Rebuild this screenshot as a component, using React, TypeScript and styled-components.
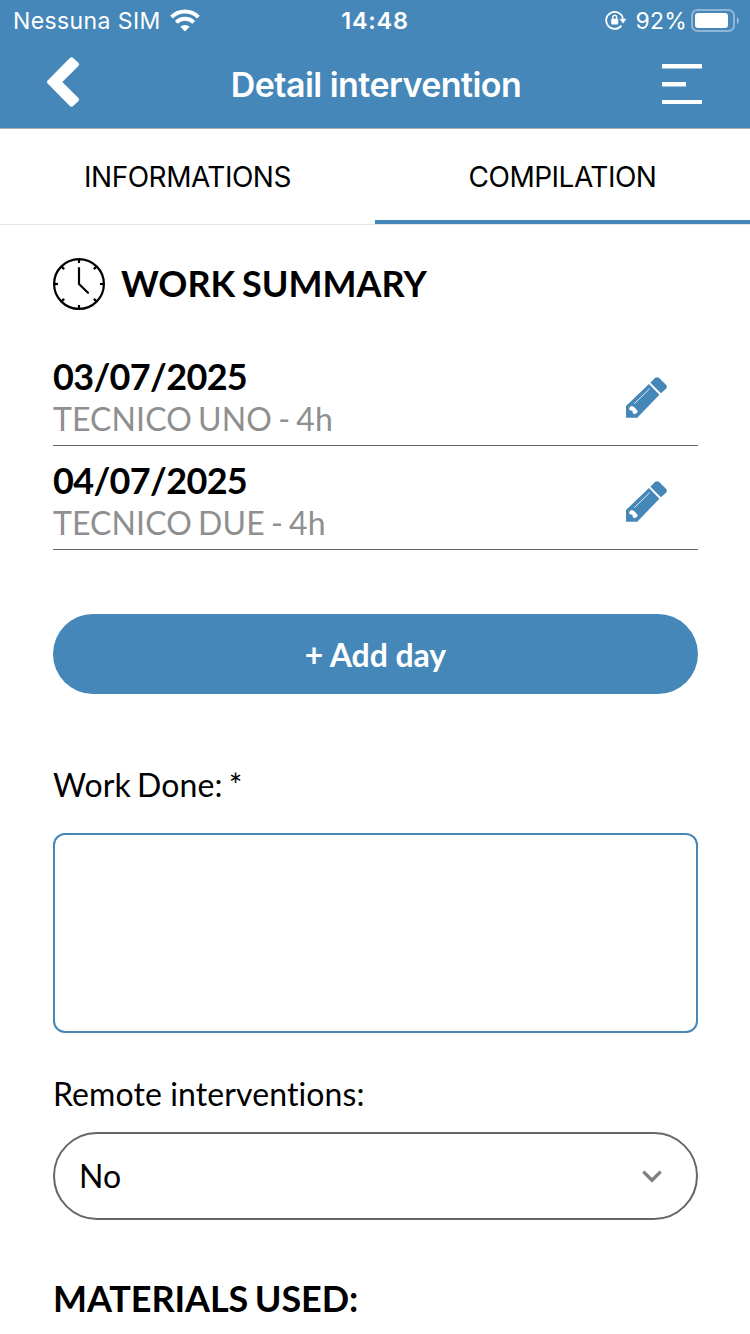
import React from "react";
import styled, { createGlobalStyle } from "styled-components";

const blue = "#4587b9";
const sans = `Inter, "Liberation Sans", sans-serif`;
const lato = `Lato, "Open Sans", sans-serif`;

const GlobalStyle = createGlobalStyle`
  *, *::before, *::after { box-sizing: border-box; }
  html, body { margin: 0; background: #fff; }
  body { font-family: ${lato}; color: #000; overflow: hidden; }
  svg { display: block; flex: none; }
`;

const Screen = styled.div`
  width: 750px;
  height: 1334px;
  overflow: hidden;
  display: flex;
  flex-direction: column;
`;

const Header = styled.header`
  height: 129px;
  flex: none;
  background: ${blue};
  border-bottom: 1px solid #a9adb0;
  color: #fff;
`;

const StatusBar = styled.div`
  height: 40px;
  display: grid;
  grid-template-columns: 1fr auto 1fr;
  align-items: center;
  padding: 0 11px 0 13px;
  font: 400 23px/38px ${sans};
`;

const StatusGroup = styled.div<{ $end?: boolean }>`
  display: flex;
  align-items: center;
  justify-content: ${(p) => (p.$end ? "flex-end" : "flex-start")};
`;

const Carrier = styled.span`
  padding-top: 2px;
  letter-spacing: 0.4px;
  margin-right: 9px;
`;

const Time = styled.span`
  padding-top: 2px;
  margin-right: 2px;
  font-weight: 600;
  font-size: 23.5px;
  letter-spacing: 0.7px;
`;

const Percent = styled.span`
  padding-top: 2px;
  margin: 0 4px 0 9px;
  letter-spacing: 0.2px;
`;

const NavBar = styled.div`
  height: 88px;
  display: grid;
  grid-template-columns: 120px 1fr 120px;
  grid-template-rows: 88px;
  align-items: center;
`;

const NavButton = styled.button<{ $end?: boolean }>`
  height: 88px;
  border: 0;
  background: none;
  color: inherit;
  display: flex;
  align-items: center;
  justify-content: ${(p) => (p.$end ? "flex-end" : "flex-start")};
  padding: ${(p) => (p.$end ? "0 48px 0 0" : "0 0 4px 46px")};
`;

const Title = styled.h1`
  margin: 0;
  padding-left: 2px;
  text-align: center;
  height: 88px;
  font: 600 34px/90px ${sans};
  letter-spacing: -0.55px;
  white-space: nowrap;
`;

const Tabs = styled.nav`
  height: 96px;
  flex: none;
  display: grid;
  grid-template-columns: 1fr 1fr;
  border-bottom: 1px solid #e6e6e6;
`;

const Tab = styled.button<{ $active?: boolean }>`
  border: 0;
  border-bottom: 4px solid ${(p) => (p.$active ? blue : "transparent")};
  background: none;
  color: #000;
  padding: 5px 0 0;
  font: 400 28px/34px ${sans};
  letter-spacing: -0.5px;
`;

const Content = styled.main`
  padding: 33px 52px 0 53px;
  display: flex;
  flex-direction: column;
`;

const Heading = styled.h2`
  margin: 0;
  height: 52px;
  display: flex;
  align-items: center;
  gap: 16px;
  font: 700 36px/50px ${lato};
  word-spacing: -2px;
  white-space: nowrap;
`;

const HeadingText = styled.span<{ $tight?: boolean }>`
  padding-bottom: 2px;
  letter-spacing: ${(p) => (p.$tight ? "-0.1px" : "0")};
`;

const DayList = styled.ul`
  list-style: none;
  margin: 32px 0 64px;
  padding: 0;
`;

const DayRow = styled.li`
  height: 104px;
  display: flex;
  justify-content: space-between;
  align-items: flex-start;
  padding: 13px 31px 0 0;
  border-bottom: 1px solid #666;
`;

const DayDate = styled.div`
  font: 700 36px/42px ${lato};
  letter-spacing: -0.65px;
`;

const DayWorker = styled.div`
  color: #8f8f8f;
  font: 400 32px/43px ${lato};
  letter-spacing: 0.1px;
  word-spacing: -2.1px;
`;

const EditButton = styled.button`
  border: 0;
  padding: 21px 0 0;
  background: none;
  color: ${blue};
`;

const AddButton = styled.button`
  height: 80px;
  border: 0;
  border-radius: 40px;
  background: ${blue};
  color: #fff;
  padding: 1px 0 0;
  font: 700 32px/79px ${lato};
  word-spacing: -0.3px;
`;

const Label = styled.label<{ $top: number; $bottom: number; $wordGap?: number }>`
  margin: ${(p) => p.$top}px 0 ${(p) => p.$bottom}px;
  font: 400 32px/39px ${lato};
  font-variant-ligatures: no-common-ligatures;
  font-feature-settings: "liga" 0, "dlig" 0;
  letter-spacing: 0.1px;
  word-spacing: ${(p) => p.$wordGap ?? 0}px;
`;

const TextArea = styled.textarea`
  display: block;
  width: 100%;
  height: 200px;
  border: 2px solid ${blue};
  border-radius: 12px;
  background: #fff;
  resize: none;
  outline: none;
`;

const Select = styled.div`
  height: 88px;
  margin-bottom: 53px;
  border: 2px solid #666;
  border-radius: 44px;
  display: flex;
  align-items: center;
  justify-content: space-between;
  padding: 0 34px 0 24px;
  font: 400 32px/39px ${lato};
`;

const SelectValue = styled.span`
  padding-bottom: 1px;
`;

const WifiIcon = () => (
  <svg width="30" height="23" viewBox="0 0 30 23" fill="none" stroke="currentColor">
    <path d="M1.6 8.1a19 19 0 0 1 26.8 0" strokeWidth="4" />
    <path d="M6.3 13.4a12.2 12.2 0 0 1 17.4 0" strokeWidth="3.8" />
    <path d="M10.4 17.8a6.6 6.6 0 0 1 9.2 0L15 22.4z" fill="currentColor" stroke="none" />
  </svg>
);

const RotationLockIcon = () => (
  <svg width="22" height="20" viewBox="0 0 22 20" fill="none" stroke="currentColor">
    <path d="M16.4 15.6A8.5 8.5 0 1 1 18 8.6" strokeWidth="1.8" />
    <path d="M14.6 8.8h6.8L18 13.4z" fill="currentColor" stroke="none" />
    <rect x="6.2" y="8.7" width="7" height="5.8" rx="0.8" fill="currentColor" stroke="none" />
    <path d="M7.8 9V7.2a1.9 1.9 0 0 1 3.8 0V9" strokeWidth="1.4" />
  </svg>
);

const BatteryIcon = () => (
  <svg width="48" height="23" viewBox="0 0 48 23" fill="none">
    <rect x="1" y="1" width="42" height="21" rx="5.5" stroke="#fff" strokeOpacity="0.4" strokeWidth="2" />
    <rect x="4" y="4" width="33" height="15" rx="3" fill="#fff" />
    <path d="M46 8c2.4 1.2 2.4 5.8 0 7z" fill="#fff" fillOpacity="0.5" />
  </svg>
);

const BackIcon = () => (
  <svg width="34" height="52" viewBox="0 0 34 52" fill="currentColor">
    <path d="M1.4 24.8 23.6 2.2q1.9-1.9 3.8 0l5 4.6q1.6 1.6 0 3.2L16.3 26l16.1 16q1.6 1.6 0 3.2l-5 4.6q-1.9 1.9-3.8 0L1.4 27.2q-1-1.2 0-2.4z" />
  </svg>
);

const MenuIcon = () => (
  <svg width="40" height="40" viewBox="0 0 40 40" fill="currentColor">
    <path d="M0 0h40v4.4H0zM0 18h24v4.4H0zM0 36h40v4H0z" />
  </svg>
);

const tickAngles = [0, 45, 90, 135, 180, 225, 270, 315];

const ClockIcon = () => (
  <svg width="52" height="52" viewBox="0 0 52 52" fill="none" stroke="#000" strokeWidth="2.2">
    <circle cx="26" cy="26" r="24.9" />
    {tickAngles.map((a) => (
      <path key={a} d="M26 1.5V5" transform={`rotate(${a} 26 26)`} />
    ))}
    <path d="M26 10v16l9 8.8" strokeLinecap="round" strokeLinejoin="round" />
  </svg>
);

const PencilIcon = () => (
  <svg width="42" height="42" viewBox="75 48 126 126">
    <path
      fill="currentColor"
      fillRule="evenodd"
      d="M147 72l31 32-66 69H78v-35zM95 137l-7 6v7l10 3v7l7 3 9-8-9-12z"
    />
    <path fill="currentColor" d="M151 68l13-13q7-6 14 0l20 19q5 6 0 12l-15 14z" />
    <path d="M103 131l46-45" stroke="#fff" strokeWidth="2.6" fill="none" />
  </svg>
);

const ChevronIcon = () => (
  <svg width="20" height="13" viewBox="0 0 20 13" fill="none" stroke="#808080" strokeWidth="3.4">
    <path d="M1.3 1.6 10 10.3l8.7-8.7" />
  </svg>
);

const days = [
  { date: "03/07/2025", worker: "TECNICO UNO - 4h" },
  { date: "04/07/2025", worker: "TECNICO DUE - 4h" },
];

export default function App() {
  return (
    <Screen>
      <GlobalStyle />
      <Header>
        <StatusBar>
          <StatusGroup>
            <Carrier>Nessuna SIM</Carrier>
            <WifiIcon />
          </StatusGroup>
          <Time>14:48</Time>
          <StatusGroup $end>
            <RotationLockIcon />
            <Percent>92%</Percent>
            <BatteryIcon />
          </StatusGroup>
        </StatusBar>
        <NavBar>
          <NavButton aria-label="Back">
            <BackIcon />
          </NavButton>
          <Title>Detail intervention</Title>
          <NavButton $end aria-label="Menu">
            <MenuIcon />
          </NavButton>
        </NavBar>
      </Header>
      <Tabs>
        <Tab>INFORMATIONS</Tab>
        <Tab $active>COMPILATION</Tab>
      </Tabs>
      <Content>
        <Heading>
          <ClockIcon />
          <HeadingText>WORK SUMMARY</HeadingText>
        </Heading>
        <DayList>
          {days.map((day) => (
            <DayRow key={day.date}>
              <div>
                <DayDate>{day.date}</DayDate>
                <DayWorker>{day.worker}</DayWorker>
              </div>
              <EditButton aria-label="Edit">
                <PencilIcon />
              </EditButton>
            </DayRow>
          ))}
        </DayList>
        <AddButton>+ Add day</AddButton>
        <Label htmlFor="work" $top={71} $bottom={29} $wordGap={-2}>
          Work Done: *
        </Label>
        <TextArea id="work" />
        <Label as="div" $top={41} $bottom={19}>
          Remote interventions:
        </Label>
        <Select>
          <SelectValue>No</SelectValue>
          <ChevronIcon />
        </Select>
        <Heading>
          <HeadingText $tight>MATERIALS USED:</HeadingText>
        </Heading>
      </Content>
    </Screen>
  );
}
